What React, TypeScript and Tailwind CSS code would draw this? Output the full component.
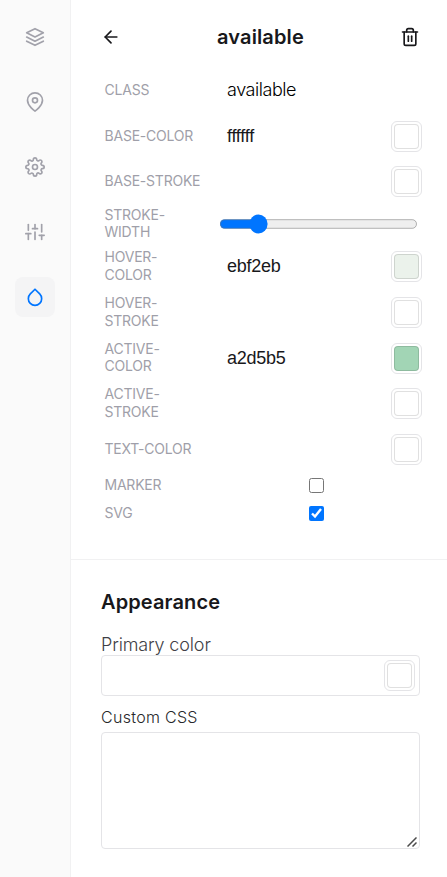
import React from "react";
import { FiLayers, FiMapPin, FiSettings, FiSliders, FiDroplet, FiArrowLeft, FiTrash2 } from "react-icons/fi";

const nav = [FiLayers, FiMapPin, FiSettings, FiSliders, FiDroplet];

function Swatch({ color = "#ffffff" }: { color?: string }) {
  return (
    <span className="flex size-[31px] shrink-0 items-center justify-center rounded-[6px] border border-[#e4e4e7] bg-white">
      <span className="size-[25px] rounded-[4px] border border-black/12" style={{ backgroundColor: color }} />
    </span>
  );
}

function Row({ label, children, className = "h-[45.6px]" }: { label: React.ReactNode; children?: React.ReactNode; className?: string }) {
  return (
    <div className={`flex items-center ${className}`}>
      <div className="w-[115px] shrink-0 pl-[0.5px] text-[14px] leading-[17.5px] tracking-[-0.22px] text-[#9f9fa9]">{label}</div>
      <div className="flex h-full flex-1 items-center">{children}</div>
    </div>
  );
}

function ColorField({ value, color }: { value?: string; color?: string }) {
  return (
    <div className="flex flex-1 items-center justify-between pt-[2px] pl-[8px]">
      <span className="pb-[1px] font-['Liberation_Sans',sans-serif] text-[18px] leading-[28px] tracking-[-0.25px] text-[#18181b]">{value}</span>
      <Swatch color={color} />
    </div>
  );
}

export default function App() {
  return (
    <div className="flex h-[877px] w-[447px] overflow-hidden bg-white font-['Inter',sans-serif] text-[#18181b]">
      <aside className="flex w-[71px] shrink-0 flex-col items-center gap-[25px] border-r border-[#f1f1f2] bg-[#fafafa] pt-[17px]">
        {nav.map((Icon, i) => (
          <button
            key={i}
            className={i === 4 ? "flex size-10 items-center justify-center rounded-lg bg-[#f4f4f5] text-[#0075ff]" : "flex size-10 items-center justify-center text-[#a1a1aa]"}
          >
            <Icon size={20} />
          </button>
        ))}
      </aside>
      <main className="flex min-w-0 flex-1 flex-col">
        <section className="flex h-[560px] shrink-0 flex-col border-b border-[#f1f1f2] pr-[25px] pl-[30px]">
          <header className="flex h-[67px] shrink-0 items-center justify-between pt-[7px] pr-[2px]">
            <FiArrowLeft size={20} />
            <h1 className="text-[20px] leading-7 font-semibold tracking-[0.12px]">available</h1>
            <FiTrash2 size={20} />
          </header>
          <div className="flex flex-col pl-[3px]">
            <Row label="CLASS"><span className="pl-[8px] text-[18px] leading-7 font-light tracking-[-0.45px] text-black">available</span></Row>
            <Row label="BASE-COLOR"><ColorField value="ffffff" /></Row>
            <Row label="BASE-STROKE"><ColorField /></Row>
            <Row label={<>STROKE-<br />WIDTH</>} className="h-[39.4px]">
              <input type="range" defaultValue={16.5} step={0.5} className="mt-[1px] h-[16px] w-[166px] [zoom:1.2] accent-[#0075ff]" />
            </Row>
            <Row label={<>HOVER-<br />COLOR</>}><ColorField value="ebf2eb" color="#ebf2eb" /></Row>
            <Row label={<>HOVER-<br />STROKE</>}><ColorField /></Row>
            <Row label={<>ACTIVE-<br />COLOR</>}><ColorField value="a2d5b5" color="#a2d5b5" /></Row>
            <Row label={<>ACTIVE-<br />STROKE</>}><ColorField /></Row>
            <Row label="TEXT-COLOR"><ColorField /></Row>
            <Row label="MARKER" className="h-[28px]"><input type="checkbox" className="ml-[90px] size-[15px]" /></Row>
            <Row label="SVG" className="h-[28px]"><input type="checkbox" defaultChecked className="ml-[90px] size-[15px] accent-[#0075ff]" /></Row>
          </div>
        </section>
        <section className="flex flex-col pt-[28px] pr-[27px] pl-[30px]">
          <h2 className="text-[20px] leading-7 font-semibold tracking-[0.12px]">Appearance</h2>
          <label className="mt-[17px] -mb-[2px] text-[18px] leading-6 font-light tracking-[-0.15px] text-[#3f3f46]">Primary color</label>
          <div className="flex h-[41px] items-center justify-end rounded-[4px] border border-[#e4e4e7] pr-[4px]">
            <Swatch />
          </div>
          <label className="mt-[9px] text-[16px] leading-6 font-light tracking-[0.3px] text-[#27272a]">Custom CSS</label>
          <div className="relative mt-[3px] h-[117px]">
            <textarea className="block size-full resize-none rounded-[4px] border border-[#e4e4e7]" />
            <svg className="absolute right-[3px] bottom-[2px]" width="10" height="10" viewBox="0 0 10 10" stroke="#4b4b4b" strokeWidth="1.5">
              <path d="M0.5 9.5 9.5 0.5M5.5 9.5 9.5 5.5" />
            </svg>
          </div>
        </section>
      </main>
    </div>
  );
}
